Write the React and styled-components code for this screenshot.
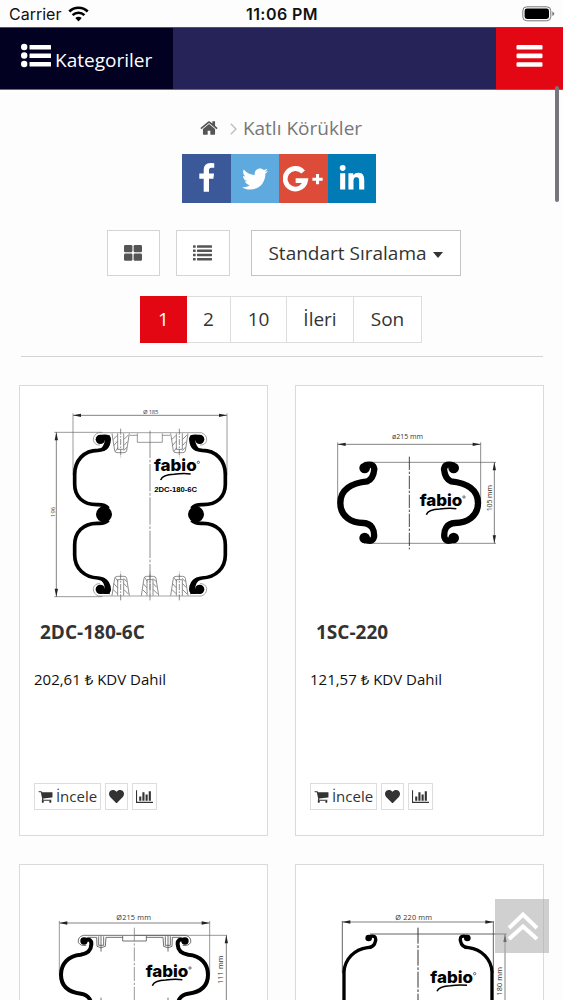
import styled, { createGlobalStyle } from "styled-components";
import { FaTwitter, FaLinkedinIn, FaHeart } from "react-icons/fa";

const GlobalStyle = createGlobalStyle`
  * {
    box-sizing: border-box;
  }

  body {
    margin: 0;
    background: #fdfdfd;
    font-family: "Open Sans", "Noto Sans", sans-serif;
    color: #333;
    overflow: hidden;
  }
`;

const Page = styled.div`
  position: relative;
  width: 563px;
  height: 1000px;
  overflow: hidden;
`;

const StatusBar = styled.div`
  display: grid;
  grid-template-columns: 1fr auto 1fr;
  align-items: center;
  height: 27px;
  padding: 1px 8px 0 9px;
  font-family: Inter, sans-serif;
  font-size: 16px;
  color: #111;
`;

const Carrier = styled.div`
  display: flex;
  align-items: center;
  gap: 7px;
`;

const Time = styled.div`
  font-weight: 600;
  font-size: 16px;
  letter-spacing: 0.45px;
`;

const BatteryWrap = styled.div`
  display: flex;
  justify-content: flex-end;
`;

const Header = styled.header`
  display: flex;
  height: 63px;
  background: #252357;
  border-top: 1px solid #55545f;
  border-bottom: 1px solid #6d6b78;
`;

const Categories = styled.div`
  display: flex;
  align-items: center;
  gap: 4px;
  width: 173px;
  padding: 2px 0 0 21px;
  background: #020122;
  color: #fff;
  font-size: 19px;

  svg {
    margin-top: -8px;
  }
`;

const MenuButton = styled.div`
  display: flex;
  align-items: center;
  justify-content: center;
  width: 67px;
  margin-left: auto;
  padding-bottom: 5px;
  background: #e30613;
`;

const Breadcrumb = styled.div`
  display: flex;
  align-items: center;
  justify-content: center;
  height: 26px;
  margin: 25px 1px 0 0;
  font-size: 19px;
  color: #777;

  svg:first-child {
    margin-right: 12px;
  }

  svg:nth-child(2) {
    margin: 1px 6px 0 0;
  }
`;

const Social = styled.div`
  display: flex;
  margin: 13px 0 0 182px;
`;

const SocialLink = styled.div`
  display: flex;
  align-items: center;
  justify-content: center;
  width: 48.5px;
  height: 49px;
  background: ${(props) => props.$color};
  color: #fff;
`;

const Toolbar = styled.div`
  display: flex;
  height: 46px;
  margin: 27px 0 0 107px;
`;

const ToolButton = styled.div`
  display: flex;
  align-items: center;
  justify-content: center;
  width: ${(props) => props.$width}px;
  margin-right: ${(props) => props.$gap || 0}px;
  padding: 0 1px 1px 0;
  border: 1px solid ${(props) => props.$border || "#d4d4d4"};
  background: #fff;
  font-size: 19px;
`;

const Caret = styled.span`
  margin: 4px 0 0 6px;
  border: 5px solid transparent;
  border-top: 6px solid #333;
  border-bottom: 0;
`;

const Pagination = styled.div`
  display: flex;
  height: 47px;
  margin: 20px 0 0 140px;
`;

const PageLink = styled.div`
  display: flex;
  align-items: center;
  justify-content: center;
  width: ${(props) => props.$width}px;
  padding-bottom: 2px;
  border: 1px solid ${(props) => (props.$active ? "#e30613" : "#ddd")};
  border-left-width: ${(props) => (props.$active ? 1 : 0)}px;
  background: ${(props) => (props.$active ? "#e30613" : "#fff")};
  color: ${(props) => (props.$active ? "#fff" : "#333")};
  font-size: 19px;
`;

const Divider = styled.hr`
  height: 1px;
  margin: 13px 20px 28px 21px;
  border: 0;
  background: #d3d3d3;
`;

const Products = styled.div`
  display: grid;
  grid-template-columns: 249px 249px;
  grid-auto-rows: 451px;
  gap: 28px 27px;
  padding-left: 19px;
`;

const Card = styled.div`
  display: flex;
  flex-direction: column;
  border: 1px solid #dadada;
  background: #fff;
`;

const ProductName = styled.h4`
  height: 26px;
  margin: 9px 0 0 20px;
  font-size: 19px;
  line-height: 26px;
  font-weight: 700;
`;

const Price = styled.div`
  margin: 23px 0 0 14px;
  font-size: 15px;
  line-height: 22px;
  color: #111;
`;

const Actions = styled.div`
  display: flex;
  gap: 4px;
  margin: 93px 0 0 14px;
`;

const ActionButton = styled.div`
  display: flex;
  align-items: center;
  justify-content: center;
  gap: 3px;
  width: ${(props) => props.$width}px;
  height: 27px;
  padding-bottom: 1px;
  border: 1px solid #ddd;
  background: #fff;
  font-size: 15px;
`;

const ScrollThumb = styled.div`
  position: absolute;
  top: 86px;
  right: 4px;
  width: 4px;
  height: 116px;
  border-radius: 2px;
  background: #77777b;
`;

const BackToTop = styled.div`
  position: absolute;
  left: 495px;
  top: 899px;
  display: flex;
  align-items: center;
  justify-content: center;
  width: 54px;
  height: 54px;
  padding-left: 2px;
  background: rgba(170, 170, 170, 0.55);
`;

const WifiIcon = () => (
  <svg width="21" height="16" viewBox="0 0 21 16" fill="none" stroke="#000">
    <path d="M1.3 5.5a13.2 13.2 0 0 1 18.4 0" strokeWidth="2.7" />
    <path d="M4.6 9.1a8.5 8.5 0 0 1 11.8 0" strokeWidth="2.6" />
    <path d="M10.5 15.5l-3.2-3.4a4.8 4.8 0 0 1 6.4 0z" fill="#000" stroke="none" />
  </svg>
);

const BatteryIcon = () => (
  <svg width="33" height="16" viewBox="0 0 33 16">
    <rect x="0.8" y="0.8" width="28" height="14" rx="4" fill="none" stroke="#777" />
    <rect x="2.6" y="2.6" width="24.4" height="10.4" rx="2.4" fill="#000" />
    <path d="M30.3 5.5q2 .8 2 2.3t-2 2.3z" fill="#777" />
  </svg>
);

const ListBulletIcon = () => (
  <svg width="30" height="25" viewBox="0 0 30 25" fill="#fff">
    {[4, 12.5, 21].map((y) => (
      <g key={y}>
        <circle cx="3.2" cy={y} r="3.2" />
        <rect x="8.5" y={y - 2.1} width="21.5" height="4.6" rx="0.6" />
      </g>
    ))}
  </svg>
);

const MenuIcon = () => (
  <svg width="27" height="22" viewBox="0 0 27 22" fill="#fff">
    {[0, 8.6, 17.2].map((y) => (
      <rect key={y} x="0.5" y={y} width="26" height="4.6" rx="1.2" />
    ))}
  </svg>
);

const FacebookIcon = () => (
  <svg width="31" height="31" viewBox="0 0 1792 1792" fill="#fff">
    <path d="M1343 12v264h-157q-86 0-116 36t-30 108v189h293l-39 296h-254v759h-306v-759h-255v-296h255v-218q0-186 104-288.500t277-102.500q147 0 228 12z" />
  </svg>
);

const GooglePlusIcon = () => (
  <svg width="40" height="26" viewBox="0 0 117 75" fill="none" stroke="#fff">
    <path d="M59 17A30 30 0 1 0 66 42H37" strokeWidth="14" />
    <path d="M101 23V53M86 38H116" strokeWidth="9" />
  </svg>
);

const HomeIcon = () => (
  <svg width="18" height="18" viewBox="40 100 1712 1600" fill="#555">
    <path d="M1472 992v480q0 26-19 45t-45 19h-384v-384h-256v384h-384q-26 0-45-19t-19-45v-480q0-1 .5-3t.5-3l575-474 575 474q1 2 1 6zm223-69l-62 74q-8 9-21 11h-3q-13 0-21-7l-692-577-692 577q-12 8-24 7-13-2-21-11l-62-74q-8-10-7-23.500t11-21.500l719-599q32-26 76-26t76 26l244 204v-195q0-14 9-23t23-9h192q14 0 23 9t9 23v408l219 182q10 8 11 21.500t-7 23.500z" />
  </svg>
);

const ChevronIcon = () => (
  <svg width="7" height="12" viewBox="0 0 7 12" fill="none" stroke="#bbb" strokeWidth="1.3">
    <path d="M.8.8L6 6 .8 11.200" />
  </svg>
);

const GridIcon = () => (
  <svg width="18" height="16" viewBox="0 0 18 16" fill="#555">
    <rect width="8.400" height="7.200" rx="1.300" />
    <rect x="9.600" width="8.400" height="7.200" rx="1.300" />
    <rect y="8.500" width="8.400" height="7.200" rx="1.300" />
    <rect x="9.600" y="8.500" width="8.400" height="7.200" rx="1.300" />
  </svg>
);

const ListIcon = () => (
  <svg width="19" height="16" viewBox="0 0 19 16" fill="#555">
    {[0.3, 4.5, 8.7, 12.9].map((y) => (
      <g key={y}>
        <rect y={y} width="2.700" height="2.500" rx="0.400" />
        <rect x="4" y={y} width="15" height="2.500" rx="0.400" />
      </g>
    ))}
  </svg>
);

const CartIcon = () => (
  <svg width="15" height="15" viewBox="0 0 1792 1792" fill="#333">
    <path d="M704 1536q0 52-38 90t-90 38-90-38-38-90 38-90 90-38 90 38 38 90zm896 0q0 52-38 90t-90 38-90-38-38-90 38-90 90-38 90 38 38 90zm128-1088v512q0 24-16.500 42.500t-40.500 21.500l-1044 122q13 60 13 70 0 16-24 64h920q26 0 45 19t19 45-19 45-45 19h-1024q-26 0-45-19t-19-45q0-11 8-31.500t16-36 21.500-40 15.500-29.500l-177-823h-204q-26 0-45-19t-19-45 19-45 45-19h256q16 0 28.500 6.500t19.500 15.500 13 24.500 8 26 5.500 29.500 4.500 26h1201q26 0 45 19t19 45z" />
  </svg>
);

const ChartIcon = () => (
  <svg width="17" height="15" viewBox="0 0 2048 1792" fill="#333">
    <path d="M640 896v512h-256v-512h256zm384-512v1024h-256v-1024h256zm1024 1152v128h-2048v-1536h128v1408h1920zm-640-896v768h-256v-768h256zm384-384v1152h-256v-1152h256z" />
  </svg>
);

const DoubleUpIcon = () => (
  <svg width="32" height="30" viewBox="0 0 32 30" fill="none" stroke="#fff" strokeWidth="4">
    <path d="M2 17L16 3.500 30 17M2 28L16 15.500 30 28" />
  </svg>
);

/* Technical drawings use three units per pixel */
const Drawing = styled.svg`
  display: block;
  width: 246px;
  height: 224px;
  flex: none;
  overflow: hidden;
  font-family: "Open Sans", sans-serif;
`;

const Brand = ({ x, y }) => (
  <g transform={`translate(${x} ${y})`}>
    <text
      fontFamily="Inter, sans-serif"
      fontSize="49"
      fontWeight="800"
      textLength="128"
      lengthAdjust="spacingAndGlyphs"
    >
      fabio
    </text>
    <circle cx="133" cy="-27" r="3.500" fill="none" stroke="#222" strokeWidth="2" />
    <path
      d="M20 26Q26 10 60 9Q88 5 110 8"
      fill="none"
      stroke="#000"
      strokeWidth="4.5"
    />
  </g>
);

const HArrow = ({ x1, x2, y }) => (
  <g>
    <path d={`M${x1} ${y}H${x2}`} stroke="#444" strokeWidth="2" />
    <path
      d={`M${x1} ${y}l24-5v10zM${x2} ${y}l-24-5v10z`}
      fill="#222"
    />
  </g>
);

const VArrow = ({ x, y1, y2 }) => (
  <g>
    <path d={`M${x} ${y1}V${y2}`} stroke="#444" strokeWidth="2" />
    <path d={`M${x} ${y1}l-5 24h10zM${x} ${y2}l-5-24h10z`} fill="#222" />
  </g>
);

const Stud = ({ x, y, flip }) => (
  <g
    transform={`translate(${x} ${y}) scale(1 ${flip ? -1 : 1})`}
    fill="none"
    stroke="#555"
    strokeWidth="2"
  >
    <path d="M-26 0L-18 52Q-17 58-10 58H10Q17 58 18 52L26 0M-9 0V48H9V0" />
    <path d="M0-14V72" strokeDasharray="18 4 5 4" />
    <path d="M-22 18L-10 6M-20 36L-10 24M-16 54L-8 43M10 18L23 5M10 36L20 25M9 52L18 42" />
  </g>
);

const DoubleSide = () => (
  <g>
    <path
      d="M255 176L279 172Q285 210 249 211C207 211 179 241 179 284V313C179 349 203 374 246 374Q270 373 280 385M280 421Q270 432 246 430C203 430 179 458 179 495V525C179 565 208 592 249 594Q283 598 279 636L255 629"
      fill="none"
      stroke="#000"
      strokeWidth="11"
    />
    <circle cx="267" cy="403" r="24" />
    <circle cx="256" cy="178" r="14" />
    <circle cx="256" cy="628" r="14" />
    <path d="M250 166Q287 158 288 177Q287 204 267 213L250 212Q268 201 270 178Z" />
    <path d="M250 640Q287 648 288 629Q287 602 267 593L250 594Q268 605 270 628Z" />
    <path
      d="M405 158H251Q234 164 235 181Q239 196 255 195M405 648H251Q234 642 235 625Q239 610 255 611"
      fill="none"
      stroke="#777"
      strokeWidth="2"
    />
  </g>
);

const DrawingDouble = () => (
  <Drawing viewBox="15 18 738 672">
    <HArrow x1={174} x2={636} y={106} />
    <path d="M174 100V285M636 100V285M118 157H262M118 650H262" stroke="#666" strokeWidth="2" />
    <VArrow x={124} y1={157} y2={650} />
    <text x="384" y="102" fontSize="18" textLength="46" fill="#444">
      Ø 185
    </text>
    <text transform="translate(119 411) rotate(-90)" fontSize="18" fill="#444">
      196
    </text>
    <DoubleSide />
    <g transform="translate(810 0) scale(-1 1)">
      <DoubleSide />
    </g>
    <path d="M405 152V645" stroke="#555" strokeWidth="2" strokeDasharray="82 5 8 5" />
    <path d="M367 160V187H442V160M345 166H367M442 166H465" fill="none" stroke="#666" strokeWidth="2" />
    <Stud x={317} y={160} />
    <Stud x={493} y={160} />
    <Stud x={317} y={647} flip />
    <Stud x={405} y={647} flip />
    <Stud x={493} y={647} flip />
    <Brand x={417} y={274} />
    <text
      x="418"
      y="335"
      fontFamily="Liberation Sans, sans-serif"
      fontSize="23"
      fontWeight="700"
      textLength="128"
    >
      2DC-180-6C
    </text>
  </Drawing>
);

const SingleSide = () => (
  <g>
    <path
      d="M223 257Q249 247 253 267C251 287 245 299 232 304C184 309 151 329 151 369S184 429 220 429C246 431 254 450 252 471Q247 490 224 477"
      fill="none"
      stroke="#000"
      strokeWidth="19"
    />
    <circle cx="224" cy="264" r="16" />
    <circle cx="224" cy="474" r="16" />
  </g>
);

const DrawingSingle = () => (
  <Drawing viewBox="18 18 738 672">
    <HArrow x1={143} x2={572} y={193} />
    <path d="M143 187V370M572 187V370M222 247H618M222 490H618" stroke="#555" strokeWidth="2" />
    <VArrow x={613} y1={247} y2={490} />
    <text x="306" y="178" fontSize="21" textLength="93" fill="#333">
      ø215 mm
    </text>
    <text transform="translate(605 394) rotate(-90)" fontSize="21" textLength="79" fill="#333">
      105 mm
    </text>
    <SingleSide />
    <g transform="translate(715 0) scale(-1 1)">
      <SingleSide />
    </g>
    <path d="M358 230V508" stroke="#222" strokeWidth="2.500" strokeDasharray="40 5 7 5" />
    <Brand x={389} y={378} />
  </Drawing>
);

const PlateSide = () => (
  <g fill="none">
    <path
      d="M210 241Q230 235 229 254C228 276 215 282 197 285C159 288 138 313 138 345S158 397 198 402C222 406 231 425 229 446Q224 466 204 454"
      stroke="#000"
      strokeWidth="12"
    />
    <circle cx="207" cy="244" r="11" fill="#000" />
    <path
      d="M358 227H205Q187 232 190 249Q198 260 214 257M323 233H273L271 260Q258 269 246 260L245 233H218M251 230V257H266V230M258 228V276M258 414V440M323 229V244H358"
      stroke="#555"
      strokeWidth="2.500"
    />
  </g>
);

const DrawingPlate = () => (
  <Drawing viewBox="15 16 738 672">
    <HArrow x1={133} x2={584} y={190} />
    <path d="M133 184V345M584 184V345M358 227H636" stroke="#666" strokeWidth="2" />
    <VArrow x={634} y1={227} y2={560} />
    <text x="304" y="182" fontSize="22" textLength="104" fill="#333">
      Ø215 mm
    </text>
    <text transform="translate(623 373) rotate(-90)" fontSize="22" textLength="86" fill="#333">
      111 mm
    </text>
    <PlateSide />
    <g transform="translate(717 0) scale(-1 1)">
      <PlateSide />
    </g>
    <path d="M358 204V560" stroke="#666" strokeWidth="2" strokeDasharray="42 5 7 5" />
    <Brand x={392} y={352} />
  </Drawing>
);

const TallSide = () => (
  <g>
    <path
      d="M237 231Q259 225 257 242Q253 264 232 264C193 269 164 299 162 337V600"
      fill="none"
      stroke="#000"
      strokeWidth="10"
    />
    <circle cx="236" cy="235" r="10" />
  </g>
);

const DrawingTall = () => (
  <Drawing viewBox="18 16 738 672">
    <HArrow x1={157} x2={610} y={187} />
    <path d="M157 184V340M610 184V340M240 223H650" stroke="#444" strokeWidth="2.500" />
    <VArrow x={645} y1={223} y2={600} />
    <text x="316" y="181" fontSize="22" textLength="110" fill="#333">
      Ø 220 mm
    </text>
    <text transform="translate(637 408) rotate(-90)" fontSize="22" textLength="86" fill="#333">
      180 mm
    </text>
    <TallSide />
    <g transform="translate(768 0) scale(-1 1)">
      <TallSide />
    </g>
    <path d="M384 204V600" stroke="#333" strokeWidth="3" strokeDasharray="48 5 8 5" />
    <Brand x={421} y={369} />
  </Drawing>
);

const socials = [
  { color: "#3b5998", icon: <FacebookIcon /> },
  { color: "#5ea9dd", icon: <FaTwitter size={26} /> },
  { color: "#dd4b39", icon: <GooglePlusIcon /> },
  { color: "#007bb6", icon: <FaLinkedinIn size={28} /> },
];

const pages = [
  { label: "1", width: 47, active: true },
  { label: "2", width: 44 },
  { label: "10", width: 56 },
  { label: "İleri", width: 67 },
  { label: "Son", width: 68 },
];

const products = [
  { name: "2DC-180-6C", price: "202,61 ₺ KDV Dahil", drawing: <DrawingDouble /> },
  { name: "1SC-220", price: "121,57 ₺ KDV Dahil", drawing: <DrawingSingle /> },
  { drawing: <DrawingPlate /> },
  { drawing: <DrawingTall /> },
];

const App = () => {
  return (
    <Page>
      <GlobalStyle />
      <StatusBar>
        <Carrier>
          Carrier <WifiIcon />
        </Carrier>
        <Time>11:06 PM</Time>
        <BatteryWrap>
          <BatteryIcon />
        </BatteryWrap>
      </StatusBar>

      <Header>
        <Categories>
          <ListBulletIcon />
          Kategoriler
        </Categories>
        <MenuButton>
          <MenuIcon />
        </MenuButton>
      </Header>

      <Breadcrumb>
        <HomeIcon />
        <ChevronIcon />
        Katlı Körükler
      </Breadcrumb>

      <Social>
        {socials.map((item) => (
          <SocialLink key={item.color} $color={item.color}>
            {item.icon}
          </SocialLink>
        ))}
      </Social>

      <Toolbar>
        <ToolButton $width={53} $gap={16}>
          <GridIcon />
        </ToolButton>
        <ToolButton $width={54} $gap={21}>
          <ListIcon />
        </ToolButton>
        <ToolButton $width={210} $border="#c4c4c4">
          Standart Sıralama
          <Caret />
        </ToolButton>
      </Toolbar>

      <Pagination>
        {pages.map((page) => (
          <PageLink key={page.label} $width={page.width} $active={page.active}>
            {page.label}
          </PageLink>
        ))}
      </Pagination>

      <Divider />

      <Products>
        {products.map((product, index) => (
          <Card key={index}>
            {product.drawing}
            {product.name && (
              <>
                <ProductName>{product.name}</ProductName>
                <Price>{product.price}</Price>
                <Actions>
                  <ActionButton $width={67}>
                    <CartIcon />
                    İncele
                  </ActionButton>
                  <ActionButton $width={23}>
                    <FaHeart size={15} />
                  </ActionButton>
                  <ActionButton $width={25}>
                    <ChartIcon />
                  </ActionButton>
                </Actions>
              </>
            )}
          </Card>
        ))}
      </Products>

      <ScrollThumb />
      <BackToTop>
        <DoubleUpIcon />
      </BackToTop>
    </Page>
  );
};

export default App;
